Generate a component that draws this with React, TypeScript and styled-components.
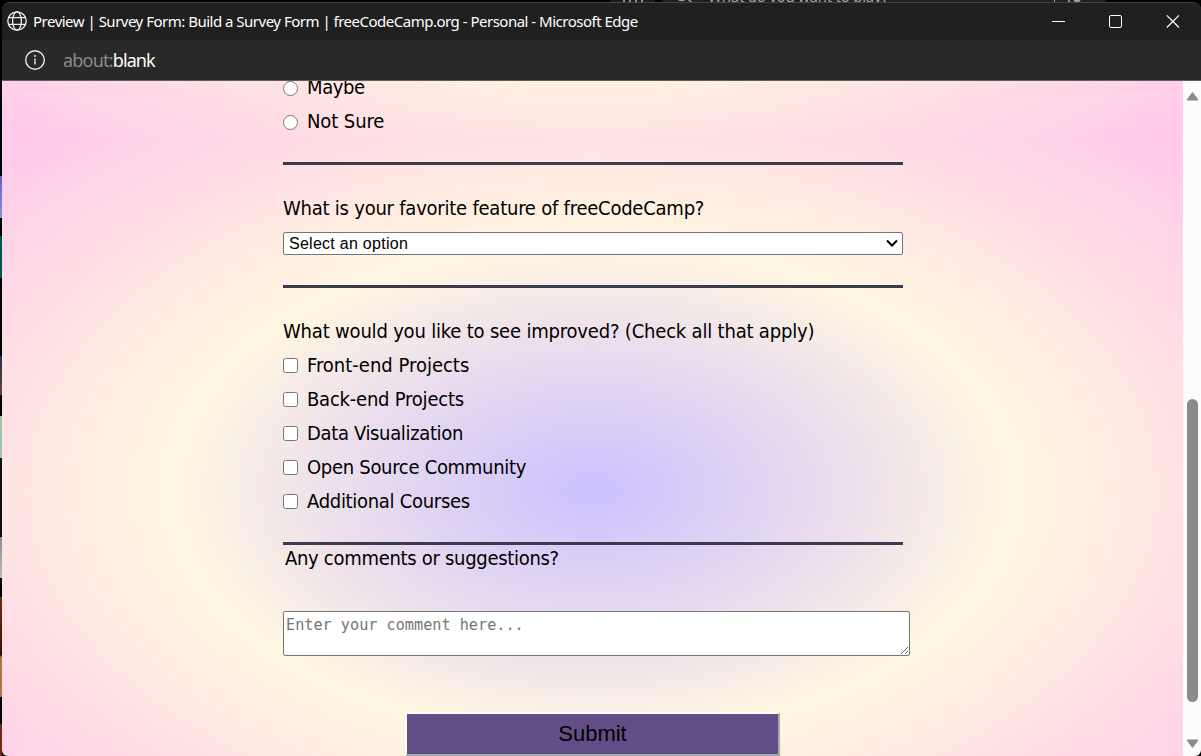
import React from 'react';
import styled, { createGlobalStyle } from 'styled-components';

const GlobalStyle = createGlobalStyle`
  * { box-sizing: border-box; }
  html, body { margin: 0; background: #000; overflow: hidden; }
`;

const Desktop = styled.div`
  display: grid;
  grid-template-columns: 2px 1fr;
  grid-template-rows: 2px 1fr;
  width: 1201px;
  height: 756px;
  background: #000;
  overflow: hidden;
`;

const BehindTop = styled.div`
  grid-column: 1 / 3;
  display: flex;
  height: 2px;
  overflow: hidden;
  padding-left: 610px;
  color: #a0a0a0;
  font: 15px/16px 'Noto Sans', sans-serif;
`;

const BehindTab = styled.div`
  display: flex;
  gap: 4px;
  width: 45px;
  height: 2px;
  margin-right: 7px;
  padding-left: 13px;
  background: #1c1c1c;
`;

const Stem = styled.i`
  width: 2px;
  height: 2px;
  background: #8c8c8c;
`;

const BehindSearch = styled.div`
  display: flex;
  width: 444px;
  height: 2px;
  padding-left: 14px;
  background: #1f1f1f;
  overflow: hidden;
`;

const BehindText = styled.span`
  width: 334px;
  margin: -12px 0 0 15px;
  letter-spacing: -0.25px;
  white-space: nowrap;
`;

const BehindLeft = styled.div`
  background: linear-gradient(
    to bottom,
    #000 0 174px, #6a5ad8 174px, #8098c0 216px, #000 216px 234px,
    #00584e 234px 276px, #000 276px 354px, #203850 354px, #704038 393px,
    #000 393px 414px, #a0c8a0 414px 456px, #101018 456px 535px,
    #888c90 535px, #b8bcb8 576px, #000 576px 595px, #6c3010 595px, #381004 653px,
    #a87848 655px 695px, #000 695px 722px, #702818 722px
  );
`;

const Window = styled.div`
  display: flex;
  flex-direction: column;
  min-height: 0;
  border-radius: 8px 8px 6px 6px;
  border-top: 1px solid #444;
  background: #202020;
  overflow: hidden;
`;

const TitleBar = styled.div`
  display: flex;
  align-items: center;
  height: 37px;
  padding: 0 0 1px 5px;
  background: #202020;
  color: #fff;
`;

const Title = styled.div`
  flex: 1;
  margin: -1px 0 0 6px;
  font: 15px/20px 'Noto Sans', sans-serif;
  letter-spacing: -0.5px;
  white-space: nowrap;
`;

const Controls = styled.div`
  display: flex;
  gap: 43px;
  margin-right: 21px;
`;

const AddressBar = styled.div`
  display: flex;
  align-items: center;
  height: 41px;
  padding-left: 22px;
  background: #292929;
  border-bottom: 1px solid #5e5e5e;
  color: #fff;
`;

const Address = styled.div`
  margin: -1px 0 0 17px;
  font: 18px/24px 'Noto Sans', sans-serif;
  letter-spacing: -0.9px;
`;

const Scheme = styled.span`
  color: #8b8b8b;
  letter-spacing: -0.8px;
`;

const Viewport = styled.div`
  display: flex;
  flex: 1;
  min-height: 0;
`;

const Page = styled.main`
  flex: 1;
  padding-left: 281px;
  overflow: hidden;
  color: #000;
  background: radial-gradient(
    #ccc0ff 0%, #ebdeed 30%, #fff7e1 50%, #ffe6e3 68%, #ffd9e6 80%, #ffc8ec 100%
  ) 0 60px / 1181px 698px;
  font: 20px/34px 'DejaVu Sans Condensed', 'DejaVu Sans', sans-serif;
`;

const Form = styled.form`
  width: 620px;
  margin-top: -10px;
`;

const Choice = styled.label`
  display: flex;
  align-items: center;
  height: 34px;
`;

const Mark = styled.input`
  width: 15px;
  height: 15px;
  margin: 1px 9px 0 0;
`;

const Copy = styled.span<{ $spacing?: number; $lift?: number }>`
  margin-top: ${(p) => -(p.$lift ?? 0) * 2}px;
  letter-spacing: ${(p) => p.$spacing ?? -0.3}px;
  white-space: nowrap;
`;

const Rule = styled.hr<{ $before: number; $after: number }>`
  height: 3px;
  margin: ${(p) => p.$before}px 0 ${(p) => p.$after}px;
  border: 0;
  background: #3b3b4f;
`;

const Question = styled.div`
  height: 34px;
`;

const SelectField = styled.div`
  position: relative;
  margin: 7px 0 30px;
`;

const Select = styled.select`
  display: block;
  width: 620px;
  height: 23px;
  padding: 0 5px;
  border: 1px solid #767676;
  border-radius: 2px;
  background: #fff;
  color: #000;
  font: 16px 'Liberation Sans', Arial, sans-serif;
  letter-spacing: 0.27px;
  appearance: none;
`;

const Chevron = styled.svg`
  position: absolute;
  top: 7px;
  right: 5px;
  pointer-events: none;
`;

const CommentLabel = styled.label`
  display: block;
  height: 66px;
  padding-left: 2px;
  line-height: 27px;
`;

const Comment = styled.textarea`
  display: block;
  width: 627px;
  height: 45px;
  padding: 2px;
  border: 1px solid #767676;
  border-radius: 2px;
  background: #fff;
  font: 15.2px/22px 'DejaVu Sans Mono', monospace;
  resize: both;
  &::placeholder { color: #757575; }
`;

const Submit = styled.button`
  display: block;
  width: 375px;
  height: 44px;
  margin: 56px 0 0 122px;
  padding: 0;
  border: 2px solid;
  border-color: #fff #a9a9a9 #a9a9a9 #fff;
  background: #624e86;
  color: #000;
  font: 22px 'Liberation Sans', Arial, sans-serif;
`;

const Scrollbar = styled.div`
  display: flex;
  flex-direction: column;
  align-items: center;
  width: 18px;
  padding: 10px 0 7px 1px;
  background: #fcfcfc;
`;

const Thumb = styled.div`
  width: 11px;
  height: 303px;
  margin: 298px 0 auto;
  border-radius: 6px;
  background: #8b8b8b;
`;

const improvements = [
  { label: 'Front-end Projects', spacing: 0 },
  { label: 'Back-end Projects', spacing: -0.22 },
  { label: 'Data Visualization', spacing: -0.35 },
  { label: 'Open Source Community', spacing: -0.3 },
  { label: 'Additional Courses', spacing: -0.3 },
];

const Globe = () => (
  <svg width="20" height="20" viewBox="0 0 20 20" fill="none" stroke="#f0f0f0" strokeWidth="1.3">
    <circle cx="10" cy="10" r="9.2" />
    <ellipse cx="10" cy="10" rx="4.4" ry="9.2" />
    <path d="M1.6 6.6h16.8M1.6 13.4h16.8" />
  </svg>
);

const Info = () => (
  <svg width="22" height="22" viewBox="0 0 22 22" fill="none" stroke="#e8e8e8" strokeWidth="1.4">
    <circle cx="11" cy="11" r="9.3" />
    <path d="M11 9.6v6" />
    <circle cx="11" cy="7" r="1" fill="#e8e8e8" stroke="none" />
  </svg>
);

export default function App() {
  return (
    <>
      <GlobalStyle />
      <Desktop>
        <BehindTop>
          <BehindTab><Stem /><Stem /><Stem /><Stem /></BehindTab>
          <BehindSearch>
            <svg width="17" height="2" fill="none" stroke="#a0a0a0" strokeWidth="1.5"><path d="M0-2.5q6 6 11 0M11-2l5 5" /></svg>
            <BehindText>What do you want to play?</BehindText>
            <svg width="40" height="2" fill="none" stroke="#a0a0a0"><path d="M12.5 0v2" /><path d="M26 0l2 2M44 0l-2 2" strokeWidth="1.5" /><circle cx="35" cy="-1.5" r="3.5" fill="#a0a0a0" /></svg>
          </BehindSearch>
        </BehindTop>
        <BehindLeft />
        <Window>
          <TitleBar>
            <Globe />
            <Title>Preview | Survey Form: Build a Survey Form | freeCodeCamp.org - Personal - Microsoft Edge</Title>
            <Controls>
              <svg width="14" height="14"><path d="M0 7.5h13" stroke="#fff" /></svg>
              <svg width="14" height="14" fill="none" stroke="#fff"><rect x=".5" y="1.5" width="12" height="12" rx="1.5" /></svg>
              <svg width="14" height="14" stroke="#fff" strokeWidth="1.2"><path d="M.8 1.3l12.2 12.2M13 1.3L.8 13.5" /></svg>
            </Controls>
          </TitleBar>
          <AddressBar>
            <Info />
            <Address><Scheme>about:</Scheme>blank</Address>
          </AddressBar>
          <Viewport>
            <Page>
              <Form>
                <Choice><Mark type="radio" name="recommend" /><Copy $lift={1} $spacing={-0.4}>Maybe</Copy></Choice>
                <Choice><Mark type="radio" name="recommend" /><Copy $lift={1} $spacing={-0.1}>Not Sure</Copy></Choice>
                <Rule $before={23} $after={26} />
                <Question><Copy $spacing={-0.23}>What is your favorite feature of freeCodeCamp?</Copy></Question>
                <SelectField>
                  <Select><option>Select an option</option></Select>
                  <Chevron width="12" height="9" fill="none" stroke="#000" strokeWidth="2">
                    <path d="M1 1.5l5 5 5-5" />
                  </Chevron>
                </SelectField>
                <Rule $before={23} $after={26} />
                <Question><Copy $spacing={-0.19}>What would you like to see improved? (Check all that apply)</Copy></Question>
                {improvements.map(({ label, spacing }) => (
                  <Choice key={label}><Mark type="checkbox" /><Copy $spacing={spacing}>{label}</Copy></Choice>
                ))}
                <Rule $before={24} $after={0} />
                <CommentLabel><Copy>Any comments or suggestions?</Copy></CommentLabel>
                <Comment placeholder="Enter your comment here..." />
                <Submit type="button">Submit</Submit>
              </Form>
            </Page>
            <Scrollbar>
              <svg width="13" height="10"><path d="M6.5 1.5L12 9H1z" fill="#8b8b8b" stroke="#8b8b8b" strokeLinejoin="round" /></svg>
              <Thumb />
              <svg width="13" height="10"><path d="M6.5 8.5L12 1H1z" fill="#8b8b8b" stroke="#8b8b8b" strokeLinejoin="round" /></svg>
            </Scrollbar>
          </Viewport>
        </Window>
      </Desktop>
    </>
  );
}
